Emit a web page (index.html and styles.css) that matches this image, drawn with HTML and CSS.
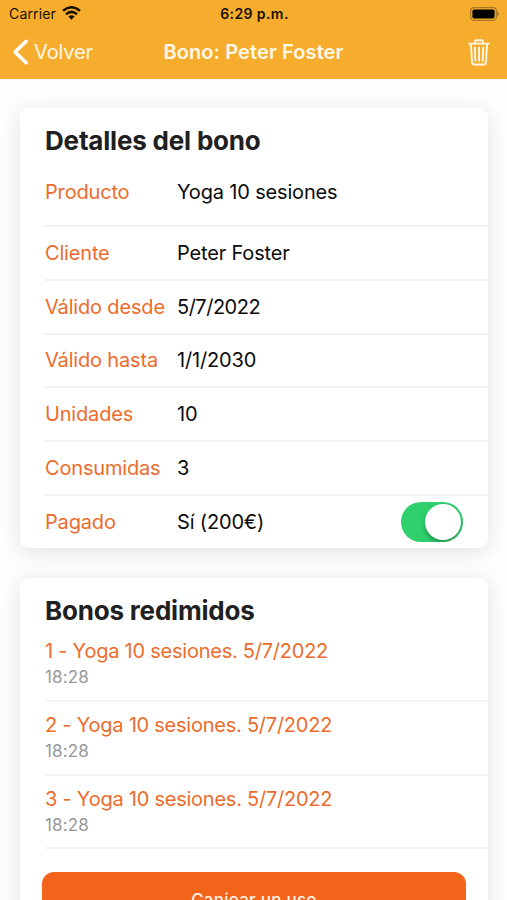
FILE: index.html
```html
<!DOCTYPE html>
<html lang="es">
<head>
<meta charset="utf-8">
<title>Bono: Peter Foster</title>
<link rel="stylesheet" href="styles.css">
</head>
<body>
<header class="header">
  <div class="status">
    <div class="carrier"><span>Carrier</span>
      <svg width="19" height="14" viewBox="0 0 19 14"><g fill="none" stroke="#171000" stroke-width="2.5"><path d="M1 4.800Q9.500-2.300 18 4.800"/><path d="M4 8.200Q9.500 3.600 15 8.200"/></g><path d="M6.400 10.500Q9.500 7.900 12.600 10.500L9.500 13.700Z" fill="#171000"/></svg>
    </div>
    <time class="clock">6:29 p.m.</time>
    <svg class="battery" width="31" height="14" viewBox="0 0 31 14"><rect x="1.600" y=".6" width="25.800" height="12.800" rx="3.500" fill="none" stroke="#a77720" stroke-width="1.200"/><rect x="3.400" y="2.400" width="22.200" height="9.200" rx="1.800" fill="#000"/><path d="M28.300 4.500Q32 7 28.300 9.500Z" fill="#a77720"/></svg>
  </div>
  <nav class="nav">
    <a class="back"><svg width="17" height="26" viewBox="0 0 17 26"><path d="M14.200 2.300L3 13L14.200 23.700" fill="none" stroke="#fff" stroke-width="3.600" stroke-linecap="round" stroke-linejoin="round"/></svg><span>Volver</span></a>
    <h1 class="title">Bono: Peter Foster</h1>
    <svg class="trash" width="22" height="27" viewBox="0 0 22 27"><g fill="none" stroke="#fff8e4" stroke-width="1.900" stroke-linecap="round" stroke-linejoin="round"><path d="M1 4.600H21"/><path d="M7 4.400V2.600Q7 1.200 8.400 1.200H13.600Q15 1.200 15 2.600V4.400"/><path d="M2.900 5L4.100 23.500Q4.300 25.500 6.200 25.500H15.800Q17.700 25.500 17.900 23.500L19.100 5"/><path d="M6.800 8.500L7.300 21.800M11 8.500V21.800M15.200 8.500L14.700 21.800"/></g></svg>
  </nav>
</header>
<main class="content">
  <section class="card details">
    <h2 class="heading">Detalles del bono</h2>
    <dl class="rows">
      <div class="row first"><dt>Producto</dt><dd>Yoga 10 sesiones</dd></div>
      <div class="row"><dt>Cliente</dt><dd>Peter Foster</dd></div>
      <div class="row"><dt>Válido desde</dt><dd class="from">5/7/2022</dd></div>
      <div class="row"><dt>Válido hasta</dt><dd>1/1/2030</dd></div>
      <div class="row"><dt>Unidades</dt><dd>10</dd></div>
      <div class="row"><dt>Consumidas</dt><dd>3</dd></div>
      <div class="row"><dt>Pagado</dt><dd>Sí (200€)</dd><dd class="toggle"><span class="knob"></span></dd></div>
    </dl>
  </section>
  <section class="card redeemed">
    <h2 class="heading">Bonos redimidos</h2>
    <ul class="list">
      <li class="item"><span class="name">1 - Yoga 10 sesiones. 5/7/2022</span><span class="hour">18:28</span></li>
      <li class="item"><span class="name">2 - Yoga 10 sesiones. 5/7/2022</span><span class="hour">18:28</span></li>
      <li class="item"><span class="name">3 - Yoga 10 sesiones. 5/7/2022</span><span class="hour">18:28</span></li>
    </ul>
    <button class="redeem">Canjear un uso</button>
  </section>
</main>
</body>
</html>
```

FILE: styles.css
```css
* { box-sizing: border-box; margin: 0; padding: 0; }
html, body { height: 900px; overflow: hidden; }
body { background: #fefefe; font-family: Inter, "Liberation Sans", sans-serif; font-size: 20px; color: #0b0b0b; }
svg { display: block; flex: none; }
.header { height: 79px; background: #f6ad2d; }
.status { height: 27px; display: grid; grid-template-columns: 1fr auto 1fr; align-items: center; padding: 0 7px 0 9px; font-size: 14px; color: #171000; }
.carrier { display: flex; align-items: center; gap: 6px; letter-spacing: .15px; }
.carrier svg { margin-top: -1px; }
.clock { font-weight: 600; letter-spacing: .4px; }
.battery { justify-self: end; }
.nav { height: 50px; display: grid; grid-template-columns: 1fr auto 1fr; align-items: center; padding: 0 12px; color: #fff8e8; }
.back { display: flex; align-items: center; gap: 5px; letter-spacing: -.15px; }
.title { font-size: 20px; font-weight: 600; letter-spacing: .1px; }
.trash { justify-self: end; margin-right: 5px; }
.content { display: flex; flex-direction: column; gap: 30px; padding: 29px 19px 0 20px; }
.card { background: #fff; border-radius: 9px; box-shadow: 0 4px 22px rgba(0, 0, 0, .12); flex: none; }
.details { height: 440px; }
.redeemed { height: 390px; }
.heading { padding: 16px 0 0 25px; font-size: 26px; line-height: 34px; font-weight: 700; letter-spacing: -.19px; color: #202020; }
.rows, .list { margin-left: 25px; list-style: none; }
.row { height: 53.800px; display: flex; align-items: center; border-bottom: 2px solid #f2f2f2; letter-spacing: -.17px; }
.row.first { height: 69px; padding-top: 1px; }
.row:last-child { border: 0; padding: 0 25px 2px 0; }
.row dt { width: 132px; color: #ed6c2b; white-space: nowrap; }
.row .from { letter-spacing: -.5px; }
.toggle { margin-left: auto; width: 62px; height: 40px; border-radius: 20px; background: #2fd16d; padding: 2px; display: flex; justify-content: flex-end; overflow: hidden; }
.knob { width: 36px; height: 36px; border-radius: 50%; background: #fff; box-shadow: 0 3px 5px rgba(0, 0, 0, .3); }
.item { height: 73.800px; display: flex; flex-direction: column; padding-top: 9px; border-bottom: 2px solid #f4f4f4; }
.name { line-height: 28px; letter-spacing: -.24px; color: #ed6c2b; }
.hour { margin-top: 1px; font-size: 17px; line-height: 23px; letter-spacing: .15px; color: #999; }
.redeem { display: block; width: 424px; height: 55px; margin: 23px 0 0 22px; border: 0; border-radius: 12px; background: #f26419; color: #fff3e8; font: 500 17px Inter, sans-serif; letter-spacing: .25px; }
```
